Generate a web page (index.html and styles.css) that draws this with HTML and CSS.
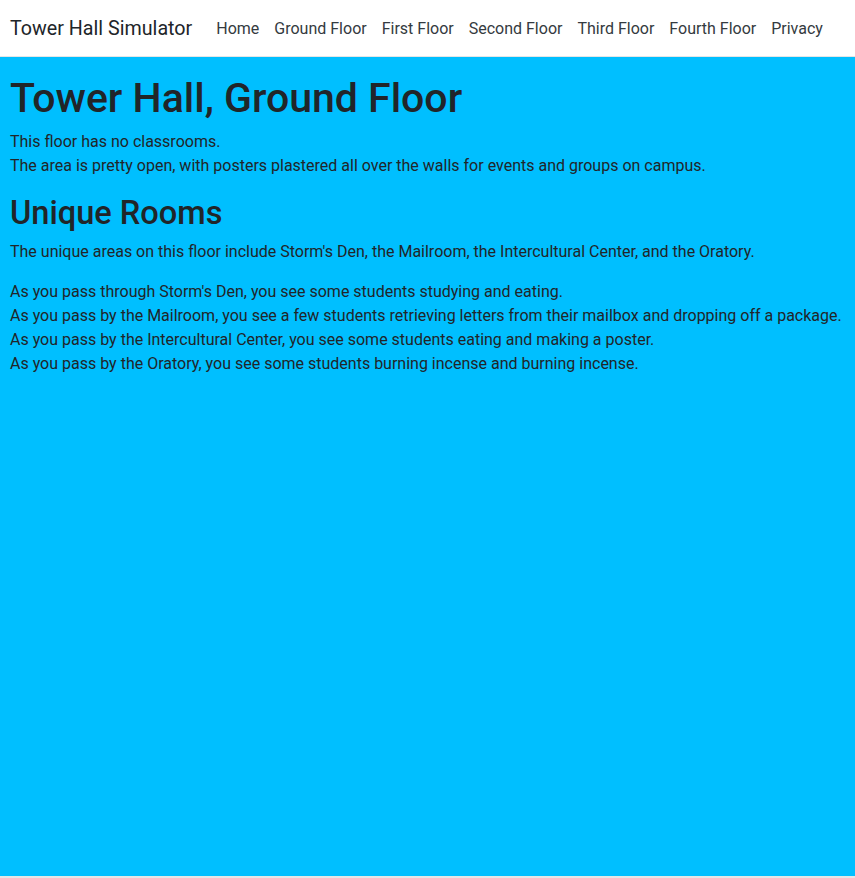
FILE: index.html
```html
<!DOCTYPE html>
<html lang="en">
<head>
<meta charset="utf-8">
<title>Tower Hall Simulator</title>
<link rel="stylesheet" href="styles.css">
</head>
<body>
<header class="navbar">
  <a class="brand" href="#">Tower Hall Simulator</a>
  <nav class="nav">
    <a href="#">Home</a>
    <a href="#">Ground Floor</a>
    <a href="#">First Floor</a>
    <a href="#">Second Floor</a>
    <a href="#">Third Floor</a>
    <a href="#">Fourth Floor</a>
    <a href="#">Privacy</a>
  </nav>
</header>
<main class="content">
  <h1>Tower Hall, Ground Floor</h1>
  <p>This floor has no classrooms.<br>The area is pretty open, with posters plastered all over the walls for events and groups on campus.</p>
  <h2>Unique Rooms</h2>
  <p>The unique areas on this floor include Storm's Den, the Mailroom, the Intercultural Center, and the Oratory.</p>
  <p>As you pass through Storm's Den, you see some students studying and eating.<br>As you pass by the Mailroom, you see a few students retrieving letters from their mailbox and dropping off a package.<br>As you pass by the Intercultural Center, you see some students eating and making a poster.<br>As you pass by the Oratory, you see some students burning incense and burning incense.</p>
</main>
</body>
</html>
```
FILE: styles.css
```css
* { box-sizing: border-box; }
html, body { height: 100%; }
body {
  margin: 0;
  background: #00bfff;
  color: #212529;
  font-family: Roboto, "Liberation Sans", sans-serif;
  font-size: 16px;
  line-height: 1.5;
  border-bottom: 2px solid #e6e6e6;
}
.navbar {
  background: #fff;
  height: 57px;
  border-bottom: 1px solid #e5e5e5;
  display: flex;
  align-items: center;
  padding: 1px 10px 0;
  margin-bottom: 17px;
  white-space: nowrap;
}
.brand { font-size: 19.7px; color: #212529; text-decoration: none; margin-right: 24px; }
.nav { display: flex; gap: 15px; }
.nav a { color: #343a40; text-decoration: none; }
.content { padding: 0 10px; }
h1 { font-size: 41px; font-weight: 500; line-height: 48px; margin: 0 0 8px; }
h2 { font-size: 32.6px; font-weight: 500; line-height: 38.4px; margin: 0 0 8px; }
p { margin: 0 0 16px; }
```
